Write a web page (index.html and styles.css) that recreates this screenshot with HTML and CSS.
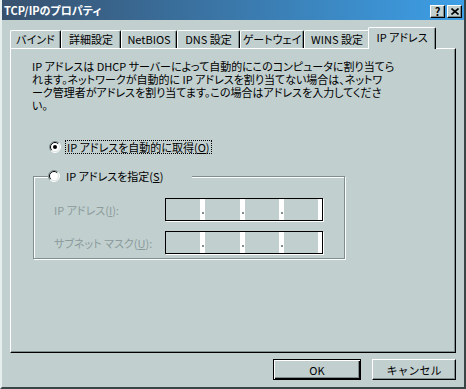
FILE: index.html
```html
<!DOCTYPE html>
<html lang="ja">
<head>
    <meta charset="UTF-8">
    <title>TCP/IPのプロパティ</title>
    <link rel="stylesheet" href="styles.css">
</head>
<body>
    <div class="window">
        <div class="titlebar">
            <span class="title">TCP/IPのプロパティ</span>
            <div class="title-buttons">
                <span class="tbtn">?</span>
                <span class="tbtn">
                    <svg width="8" height="7" viewBox="0 0 8 7"><path d="M0.5 0.5 L7.5 6.5 M7.5 0.5 L0.5 6.5" stroke="#000" stroke-width="1.6"/></svg>
                </span>
            </div>
        </div>
        <div class="content">
            <div class="tabs">
                <div class="tab">バインド</div>
                <div class="tab">詳細設定</div>
                <div class="tab">NetBIOS</div>
                <div class="tab">DNS 設定</div>
                <div class="tab">ゲートウェイ</div>
                <div class="tab">WINS 設定</div>
                <div class="tab active">IP アドレス</div>
            </div>
            <div class="panel">
                <p class="desc">IP アドレスは DHCP サーバーによって自動的にこのコンピュータに割り当てら<br>れます。ネットワークが自動的に IP アドレスを割り当てない場合は、ネットワ<br>ーク管理者がアドレスを割り当てます。この場合はアドレスを入力してくださ<br>い。</p>
                <div class="radio-row">
                    <svg class="radio" width="12" height="12" viewBox="0 0 12 12">
                        <circle cx="6" cy="6" r="5" fill="#fff"/>
                        <path d="M2.1 9.9 A5.5 5.5 0 0 1 9.9 2.1" stroke="#7f8f8f" fill="none"/>
                        <path d="M2.8 9.2 A4.5 4.5 0 0 1 9.2 2.8" stroke="#000" fill="none"/>
                        <path d="M9.9 2.1 A5.5 5.5 0 0 1 2.1 9.9" stroke="#fff" fill="none"/>
                        <path d="M9.2 2.8 A4.5 4.5 0 0 1 2.8 9.2" stroke="#dfe6e6" fill="none"/>
                        <circle cx="6" cy="6" r="2" fill="#000"/>
                    </svg>
                    <span class="radio-label focus">IP アドレスを自動的に取得(<u>O</u>)</span>
                </div>
                <fieldset class="group">
                    <legend>
                        <svg class="radio" width="12" height="12" viewBox="0 0 12 12">
                            <circle cx="6" cy="6" r="5" fill="#fff"/>
                            <path d="M2.1 9.9 A5.5 5.5 0 0 1 9.9 2.1" stroke="#7f8f8f" fill="none"/>
                            <path d="M2.8 9.2 A4.5 4.5 0 0 1 9.2 2.8" stroke="#000" fill="none"/>
                            <path d="M9.9 2.1 A5.5 5.5 0 0 1 2.1 9.9" stroke="#fff" fill="none"/>
                            <path d="M9.2 2.8 A4.5 4.5 0 0 1 2.8 9.2" stroke="#dfe6e6" fill="none"/>
                        </svg>
                        <span class="radio-label">IP アドレスを指定(<u>S</u>)</span>
                    </legend>
                    <div class="field-row">
                        <span class="field-label">IP アドレス(<u>I</u>):</span>
                        <div class="ipbox">
                            <span class="seg"></span><span class="dot"></span>
                            <span class="seg"></span><span class="dot"></span>
                            <span class="seg"></span><span class="dot"></span>
                            <span class="seg"></span><span class="end"></span>
                        </div>
                    </div>
                    <div class="field-row">
                        <span class="field-label">サブネット マスク(<u>U</u>):</span>
                        <div class="ipbox">
                            <span class="seg"></span><span class="dot"></span>
                            <span class="seg"></span><span class="dot"></span>
                            <span class="seg"></span><span class="dot"></span>
                            <span class="seg"></span><span class="end"></span>
                        </div>
                    </div>
                </fieldset>
            </div>
            <div class="buttons">
                <button class="btn default">OK</button>
                <button class="btn cancel">キャンセル</button>
            </div>
        </div>
    </div>
</body>
</html>
```

FILE: styles.css
```css
body {
    margin: 0;
    font-family: "Noto Sans CJK JP", sans-serif;
    font-size: 11px;
    font-feature-settings: "palt" 1;
    background-color: #c1cfcf;
    color: #000;
}
.window {
    width: 466px;
    height: 389px;
    box-sizing: border-box;
    background-color: #c1cfcf;
    border-left: 2px solid #e6eeee;
    border-right: 2px solid #3a4545;
    border-bottom: 2px solid #3a4545;
    display: flex;
    flex-direction: column;
}
.titlebar {
    height: 20px;
    flex-shrink: 0;
    background: linear-gradient(to right, #38516e, #3d9fe6);
    display: flex;
    align-items: center;
    justify-content: space-between;
    padding: 0 2px 0 2px;
    color: #fff;
}
.title {
    font-weight: bold;
    font-size: 11px;
    line-height: 14px;
}
.title-buttons {
    display: flex;
    gap: 2px;
    margin-top: 2px;
}
.tbtn {
    width: 15px;
    height: 13px;
    box-sizing: border-box;
    background-color: #c1cfcf;
    border-top: 1px solid #fff;
    border-left: 1px solid #fff;
    border-right: 1px solid #000;
    border-bottom: 1px solid #000;
    box-shadow: inset -1px -1px 0 #7f8f8f;
    color: #000;
    font-weight: bold;
    font-size: 11px;
    line-height: 11px;
    display: flex;
    align-items: center;
    justify-content: center;
}
.content {
    padding: 7px 8px 0 8px;
}
.tabs {
    display: flex;
    align-items: flex-end;
    height: 21px;
    position: relative;
    z-index: 1;
}
.tab {
    height: 18px;
    box-sizing: border-box;
    border-top: 1px solid #fff;
    border-left: 1px solid #fff;
    border-right: 1px solid #000;
    border-radius: 2px 2px 0 0;
    box-shadow: inset -1px 0 0 #7f8f8f;
    text-align: center;
    line-height: 16px;
    white-space: nowrap;
}
.tab:nth-child(1) { width: 51px; }
.tab:nth-child(2) { width: 60px; }
.tab:nth-child(3) { width: 56px; }
.tab:nth-child(4) { width: 63px; }
.tab:nth-child(5) { width: 64px; }
.tab:nth-child(6) { width: 66px; }
.tab.active {
    width: 68px;
    height: 22px;
    margin: 0 -2px -1px -2px;
    background-color: #c1cfcf;
    line-height: 19px;
}
.panel {
    height: 305px;
    box-sizing: border-box;
    border-top: 1px solid #fff;
    border-left: 1px solid #fff;
    border-right: 1px solid #000;
    border-bottom: 1px solid #000;
    box-shadow: inset -1px -1px 0 #7f8f8f;
    padding: 11px 20px 0 21px;
}
.desc {
    margin: 0;
    line-height: 13px;
    white-space: nowrap;
}
.radio-row {
    display: flex;
    align-items: center;
    margin: 28px 0 0 17px;
    height: 14px;
}
.radio {
    flex-shrink: 0;
}
.radio-label {
    margin-left: 5px;
    line-height: 12px;
    padding: 0 1px;
    white-space: nowrap;
}
.focus {
    outline: 1px dotted #000;
}
.group {
    width: 312px;
    box-sizing: border-box;
    margin: 15px 0 0 1px;
    padding: 15px 0 4px 0;
    border: 1px solid #7f8f8f;
    box-shadow: inset 1px 1px 0 #fff, 1px 1px 0 #fff;
}
.group legend {
    width: 144px;
    box-sizing: border-box;
    height: 14px;
    margin-left: 14px;
    padding: 0;
    display: flex;
    align-items: center;
    background-color: #c1cfcf;
}
.field-row {
    display: flex;
    align-items: center;
    height: 23px;
    padding-left: 20px;
}
.field-row + .field-row {
    margin-top: 10px;
}
.field-label {
    width: 111px;
    color: #8b9b9b;
    white-space: nowrap;
}
.ipbox {
    width: 158px;
    height: 23px;
    box-sizing: border-box;
    border: 1px solid #000;
    box-shadow: 1px 1px 0 #fff;
    display: flex;
}
.seg {
    flex: 1;
    background-color: #c1cfcf;
}
.dot {
    width: 5px;
    background-color: #fff;
    position: relative;
}
.dot::after {
    content: "";
    position: absolute;
    left: 2px;
    bottom: 6px;
    width: 2px;
    height: 2px;
    background-color: #7f8f8f;
}
.end {
    width: 4px;
    background-color: #fff;
}
.buttons {
    display: flex;
    justify-content: flex-end;
    gap: 11px;
    margin-top: 6px;
}
.btn {
    height: 21px;
    box-sizing: border-box;
    font-family: inherit;
    font-size: 11px;
    background-color: #c1cfcf;
    padding: 0;
    color: #000;
}
.btn.default {
    width: 88px;
    border: 1px solid #000;
    box-shadow: inset 1px 1px 0 #fff, inset -1px -1px 0 #000, inset -2px -2px 0 #7f8f8f;
}
.btn.cancel {
    width: 84px;
    border-top: 1px solid #fff;
    border-left: 1px solid #fff;
    border-right: 1px solid #000;
    border-bottom: 1px solid #000;
    box-shadow: inset -1px -1px 0 #7f8f8f;
}
```
